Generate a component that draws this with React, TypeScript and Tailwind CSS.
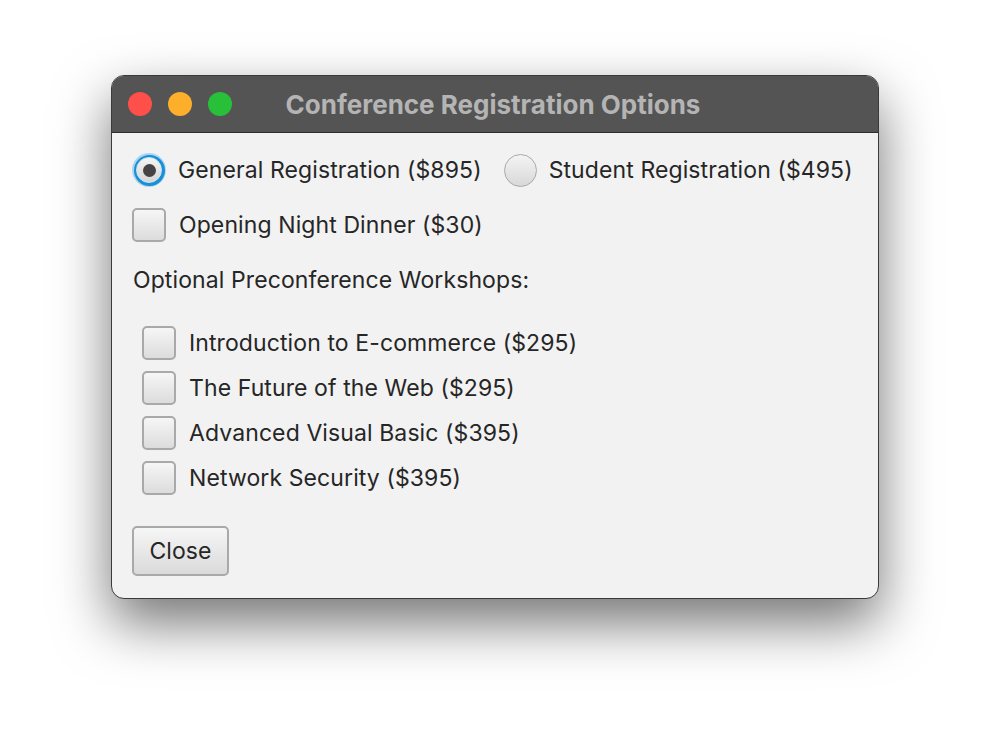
import React from "react";

function Radio({ checked }: { checked?: boolean }) {
  if (checked) {
    return (
      <div className="w-[34px] h-[34px] rounded-full flex items-center justify-center bg-[#a9d6f0]">
        <div className="w-[31px] h-[31px] rounded-full flex items-center justify-center bg-[#1a8fd6]">
          <div className="w-[26px] h-[26px] rounded-full flex items-center justify-center bg-gradient-to-b from-[#f4f4f4] to-[#d6d6d6] border border-[#cfe6f5]">
            <div className="w-[13px] h-[13px] rounded-full bg-[#444444]" />
          </div>
        </div>
      </div>
    );
  }
  return (
    <div className="w-[34px] h-[34px] flex items-center justify-center">
      <div className="w-[33px] h-[33px] rounded-full border border-[#a8a8a8] bg-gradient-to-b from-[#f4f4f4] to-[#d8d8d8]" />
    </div>
  );
}

function Check() {
  return (
    <div className="w-[34px] h-[34px] rounded-[5px] border-2 border-[#a9a9a9] bg-gradient-to-b from-[#f6f6f6] to-[#dcdcdc] shrink-0" />
  );
}

const font = { fontFamily: 'Inter, "Noto Sans", sans-serif' };

export default function App() {
  const workshops = [
    "Introduction to E-commerce ($295)",
    "The Future of the Web ($295)",
    "Advanced Visual Basic ($395)",
    "Network Security ($395)",
  ];
  return (
    <div className="w-[990px] h-[746px] bg-white pt-[75px] pl-[111px]" style={font}>
      <div className="w-[768px] h-[524px] rounded-[13px] border border-[#3a3a3a] bg-[#f2f2f2] overflow-hidden shadow-[0_24px_55px_rgba(0,0,0,0.55)] flex flex-col">
        <div className="h-[57px] bg-[#545454] border-b border-[#2e2e2e] flex items-center relative shrink-0">
          <div className="flex items-center gap-[16px] pl-[16px]">
            <div className="w-[24px] h-[24px] rounded-full bg-[#fe4f4a]" />
            <div className="w-[24px] h-[24px] rounded-full bg-[#fdae2b]" />
            <div className="w-[24px] h-[24px] rounded-full bg-[#28c039]" />
          </div>
          <div className="absolute left-0 right-0 top-0 h-full flex items-center justify-center pointer-events-none">
            <span className="text-[26px] font-bold text-[#b4b4b4] ml-[-4px]">Conference Registration Options</span>
          </div>
        </div>
        <div className="flex flex-col pl-[20px] pt-[20px] text-[#262626] text-[23px] tracking-[0.1px]">
          <div className="flex items-center h-[34px]">
            <Radio checked />
            <span className="ml-[12px]">General Registration ($895)</span>
            <div className="ml-[22px]"><Radio /></div>
            <span className="ml-[11px]">Student Registration ($495)</span>
          </div>
          <div className="flex items-center h-[34px] mt-[21px]">
            <Check />
            <span className="ml-[13px]">Opening Night Dinner ($30)</span>
          </div>
          <div className="h-[34px] mt-[21px] flex items-center pl-[1px]">Optional Preconference Workshops:</div>
          <div className="flex flex-col gap-[11px] mt-[29px] pl-[10px]">
            {workshops.map((w) => (
              <div key={w} className="flex items-center h-[34px]">
                <Check />
                <span className="ml-[13px]">{w}</span>
              </div>
            ))}
          </div>
          <div className="mt-[31px]">
            <button className="w-[97px] h-[50px] rounded-[5px] border-2 border-[#a9a9a9] bg-gradient-to-b from-[#f6f6f6] to-[#dadada] text-[23px] text-[#262626] flex items-center justify-center">
              Close
            </button>
          </div>
        </div>
      </div>
    </div>
  );
}
